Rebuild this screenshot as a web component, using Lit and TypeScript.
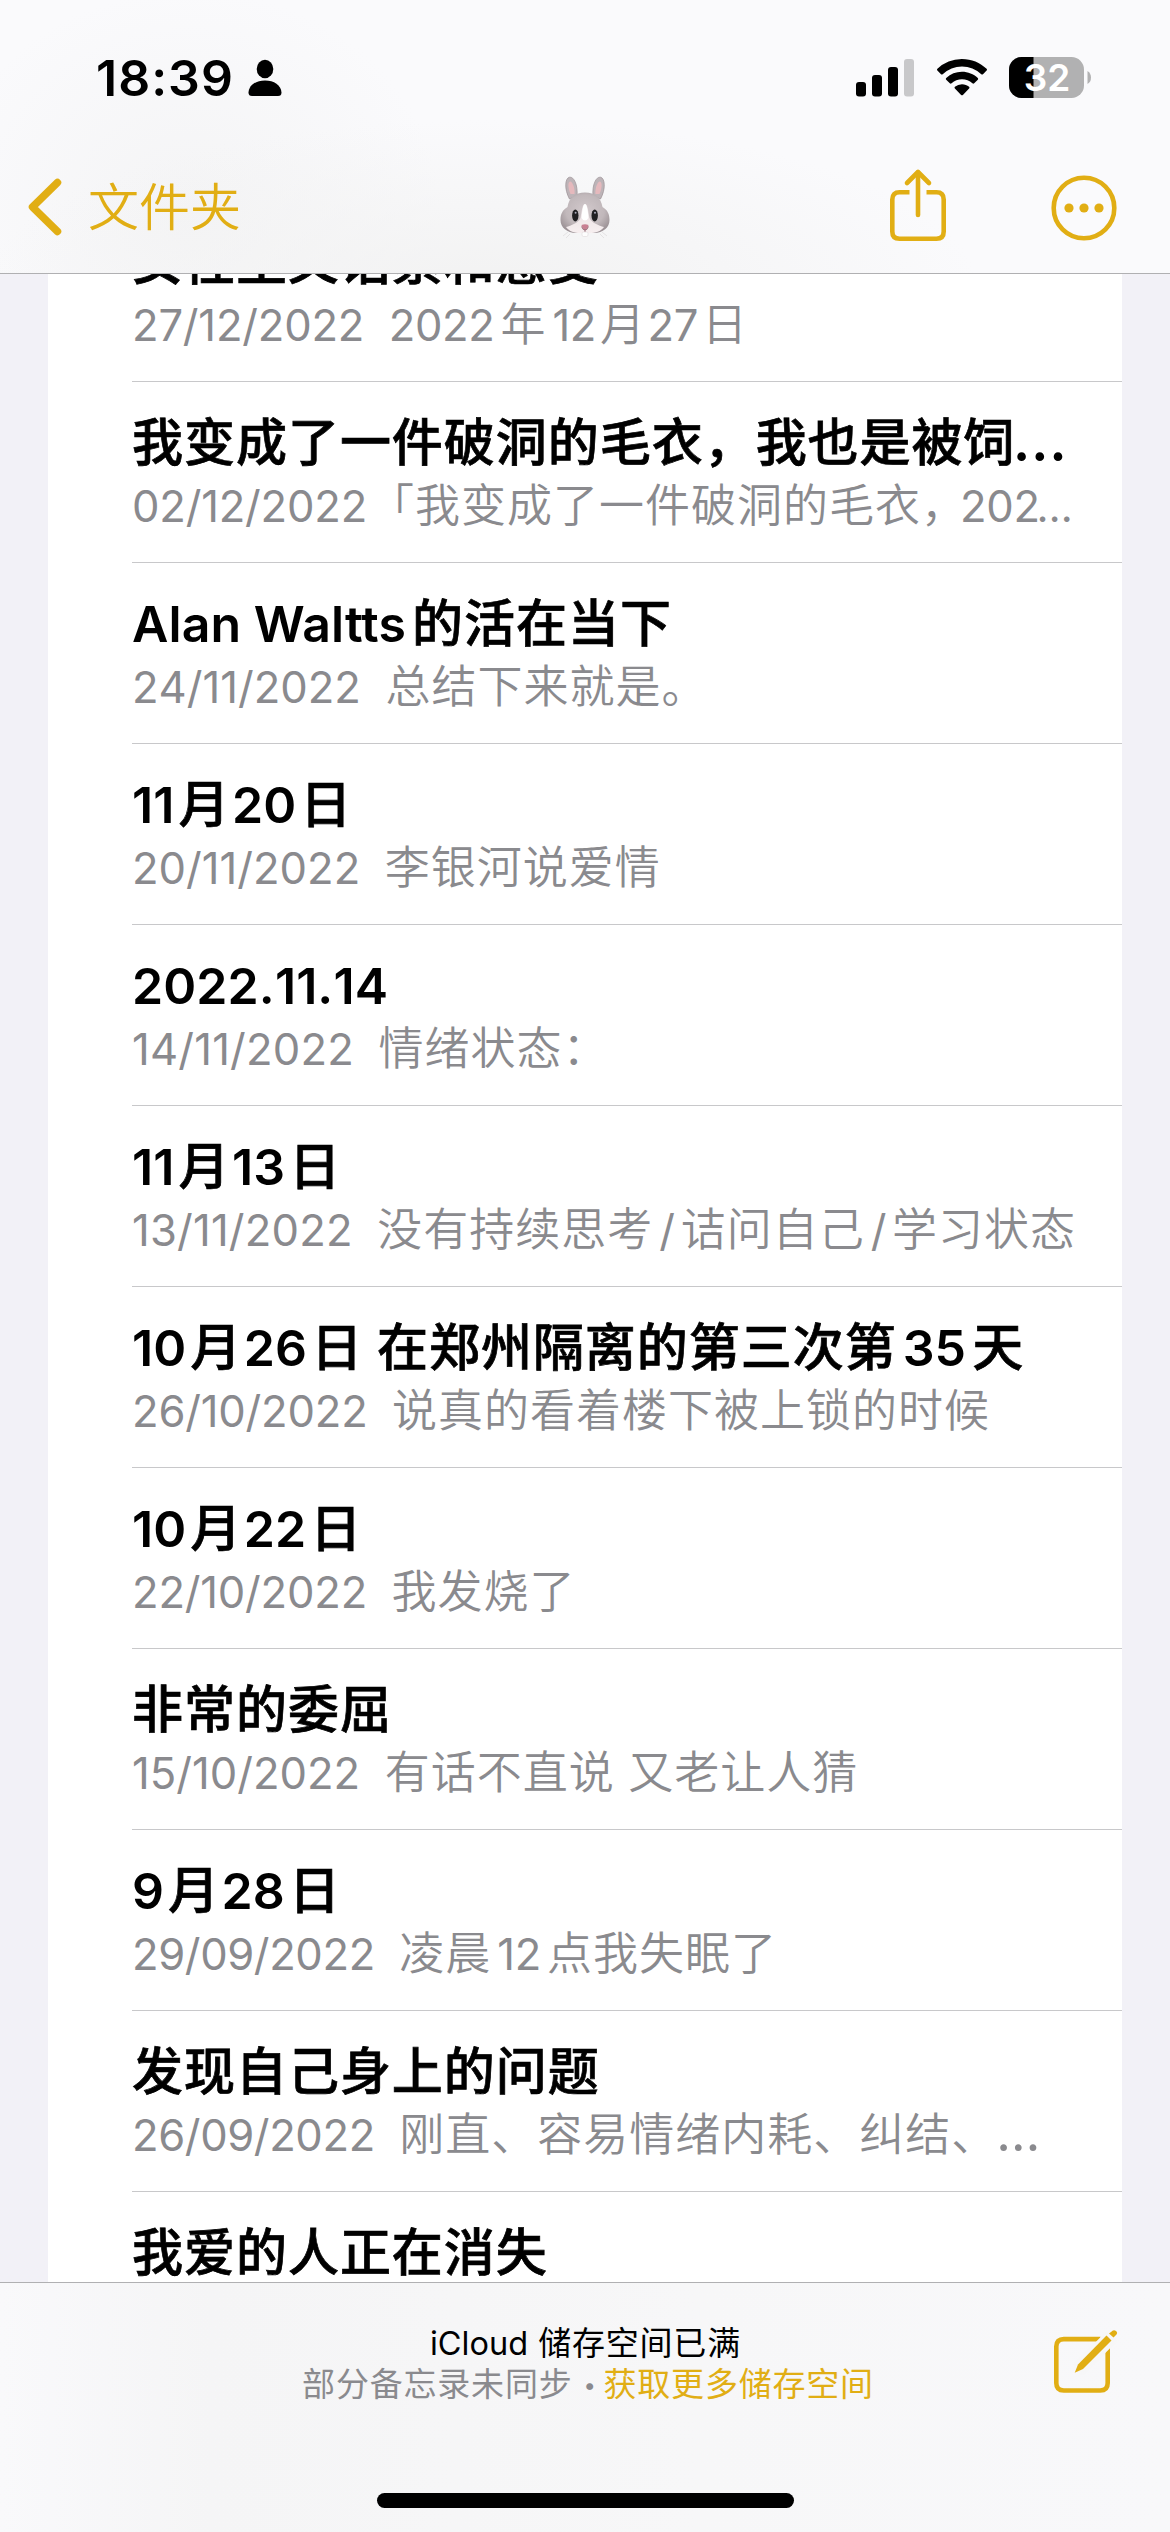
import { LitElement, html, svg, css } from "lit";
import { customElement, property } from "lit/decorators.js";
import { styleMap } from "lit/directives/style-map.js";

interface Note {
  title: string;
  date: string;
  text: string;
  snug?: boolean;
}

const NOTES: Note[] = [
  { title: "女性主义话素和感受", date: "27/12/2022", text: "2022年12月27日" },
  { title: "我变成了一件破洞的毛衣，我也是被饲…", date: "02/12/2022", text: "「我变成了一件破洞的毛衣，202…", snug: true },
  { title: "Alan Waltts的活在当下", date: "24/11/2022", text: "总结下来就是。" },
  { title: "11月20日", date: "20/11/2022", text: "李银河说爱情" },
  { title: "2022.11.14", date: "14/11/2022", text: "情绪状态：" },
  { title: "11月13日", date: "13/11/2022", text: "没有持续思考/诘问自己/学习状态" },
  { title: "10月26日 在郑州隔离的第三次第35天", date: "26/10/2022", text: "说真的看着楼下被上锁的时候" },
  { title: "10月22日", date: "22/10/2022", text: "我发烧了" },
  { title: "非常的委屈", date: "15/10/2022", text: "有话不直说 又老让人猜" },
  { title: "9月28日", date: "29/09/2022", text: "凌晨12点我失眠了" },
  { title: "发现自己身上的问题", date: "26/09/2022", text: "刚直、容易情绪内耗、纠结、…" },
  { title: "我爱的人正在消失", date: "", text: "" },
];

/* Splits mixed text so that Latin runs and ellipses get their own face and spacing. */
const runs = (s: string) =>
  s.split(/([!-~]+(?: [!-~]+)*|…| )/).filter(Boolean).map((part) =>
    part === "…"
      ? html`<span class="dots">…</span>`
      : part === " "
        ? html`<span class="space"> </span>`
        : /^[!-~]/.test(part)
          ? html`<span class="latin ${/[a-z]/.test(part) ? "words" : ""}">${part}</span>`
          : html`<span class="han ${/[月日]$/.test(part) ? "slim" : part.endsWith("，") ? "comma" : ""}">${part}</span>`
  );

/* The digit 1 is narrow in this face, so dates are opened up by how many they hold. */
const dateTracking = (date: string) => ({
  letterSpacing: `${(-0.4 + 0.2 * (date.split("1").length - 1)).toFixed(1)}px`,
});

@customElement("note-row")
export class NoteRow extends LitElement {
  @property({ attribute: false }) note!: Note;

  static styles = css`
    :host {
      display: block;
      box-sizing: border-box;
      height: 181px;
      margin-left: 84px;
      border-bottom: 1px solid #c8c8ca;
      padding-top: 23px;
    }
    .title,
    .sub {
      display: flex;
      align-items: baseline;
      white-space: pre;
    }
    .title::before {
      content: "\\200b";
      font-family: "Noto Sans CJK SC", sans-serif;
      width: 0;
    }
    .title {
      height: 71px;
      line-height: 68px;
      font-size: 51px;
      font-weight: 600;
      letter-spacing: 0.97px;
      color: #000;
    }
    .sub {
      height: 54px;
      line-height: 54px;
      font-size: 45px;
      letter-spacing: 1px;
      color: #8a8a8e;
    }
    .han {
      font-family: "Noto Sans CJK SC", sans-serif;
    }
    .title .han {
      font-weight: 500;
      -webkit-text-stroke: 0.7px #000;
    }
    .sub .han {
      font-weight: 350;
    }
    .latin,
    .date,
    .dots,
    .space {
      font-family: Inter, sans-serif;
      font-kerning: none;
    }
    .title .latin {
      font-size: 50px;
      letter-spacing: 0.1px;
    }
    .title .words {
      font-kerning: normal;
    }
    .title .dots {
      font-size: 60px;
      font-weight: 500;
      line-height: 0;
      margin-left: -3px;
    }
    .sub .latin,
    .date {
      font-size: 43.6px;
      letter-spacing: -0.4px;
    }
    .sub .dots {
      font-size: 51px;
      line-height: 0;
      letter-spacing: 0;
      margin-left: -1px;
    }
    .sub .latin + .dots {
      font-size: 42px;
      margin-left: -3px;
    }
    .han + .latin {
      margin-left: 6px;
    }
    .latin + .han {
      margin-left: 6px;
    }
    .slim + .latin {
      margin-left: 1.5px;
    }
    .latin + .slim {
      margin-left: 4px;
    }
    .comma + .latin {
      margin-left: -7px;
    }
    .date {
      margin-right: 24.5px;
    }
    .date.snug {
      margin-right: 2px;
    }
  `;

  render() {
    const n = this.note;
    return html`
      <div class="title">${runs(n.title)}</div>
      <div class="sub"><span class="date ${n.snug ? "snug" : ""}" style=${styleMap(dateTracking(n.date))}>${n.date}</span>${runs(n.text)}</div>
    `;
  }
}

const person = svg`<svg width="34" height="38" viewBox="0 0 34 38">
  <ellipse cx="17" cy="10" rx="8.3" ry="9.2"/>
  <path d="M4 37Q.5 37 .5 33.500C1 26 8 21.500 17 21.500S33 26 33.500 33.500Q33.500 37 30 37Z"/></svg>`;

const signal = svg`<svg width="59" height="38" viewBox="0 0 59 38">
  <rect x="0" y="23" width="10" height="14.500" rx="3"/><rect x="16" y="16" width="10" height="21.500" rx="3"/>
  <rect x="32" y="8" width="10" height="29.500" rx="3"/><rect x="48" y="0" width="10" height="37.500" rx="3" fill="#c8c8ca"/></svg>`;

const wifi = svg`<svg width="50" height="37" viewBox="0 0 50 37">
  <path d="M25 0C34.500 0 43.200 3.700 49.600 9.800Q50.400 10.700 49.600 11.600L46 15.200Q45.200 16 44.300 15.200A27.800 27.800 0 0 0 5.700 15.200Q4.800 16 4 15.200L.4 11.600Q-.4 10.700.4 9.800A35.500 35.500 0 0 1 25 0Z"/>
  <path d="M25 12.800C31 12.800 36.600 15.100 40.800 18.900Q41.700 19.800 40.800 20.700L37.200 24.300Q36.300 25.100 35.400 24.300A15.500 15.500 0 0 0 14.600 24.300Q13.700 25.100 12.800 24.300L9.200 20.700Q8.300 19.800 9.200 18.900A23.300 23.300 0 0 1 25 12.800Z"/>
  <path d="M25 25.200C27.700 25.200 30.200 26.200 32.100 27.800Q33 28.700 32.100 29.600L25.900 35.900Q25 36.800 24.100 35.900L17.900 29.600Q17 28.700 17.900 27.800A11 11 0 0 1 25 25.200Z"/></svg>`;

const batteryShape = svg`<svg width="83" height="41" viewBox="0 0 83 41">
  <defs><clipPath id="cell"><rect width="75" height="41" rx="12.500"/></clipPath></defs>
  <g clip-path="url(#cell)"><rect width="75" height="41" fill="#b1b1b2"/><rect width="24.500" height="41"/></g>
  <path d="M78.500 14Q82 16 82 20.500T78.500 27Z" fill="#b1b1b2"/></svg>`;

const chevron = svg`<svg width="34" height="58" viewBox="0 0 34 58">
  <path d="M29.500 4.500L4.500 29L29.500 53.500" fill="none" stroke="#e1ae14" stroke-width="7.500" stroke-linecap="round" stroke-linejoin="round"/></svg>`;

const rabbit = svg`<svg width="58" height="64" viewBox="0 0 58 64">
  <defs>
    <radialGradient id="fur" cx=".5" cy=".45" r=".6"><stop offset="0" stop-color="#d2c9cc"/><stop offset=".65" stop-color="#c1b8bb"/><stop offset="1" stop-color="#9c9296"/></radialGradient>
    <linearGradient id="chin" x1="0" y1="0" x2="0" y2="1"><stop offset="0" stop-color="#e9dfe2"/><stop offset="1" stop-color="#f7eff0"/></linearGradient>
  </defs>
  <path d="M13.500 23C8 13 9 2 13.500 1.200S22 9 21 20Z" fill="#bdb4b8" stroke="#9b9195" stroke-width=".7"/>
  <path d="M44.500 23C50 13 49 2 44.500 1.200S36 9 37 20Z" fill="#bdb4b8" stroke="#9b9195" stroke-width=".7"/>
  <path d="M14.500 18C11.500 11 12 6 14 5.500S19 11 18.600 18Z" fill="#e5b9bd"/>
  <path d="M43.500 18C46.500 11 46 6 44 5.500S39 11 39.400 18Z" fill="#e5b9bd"/>
  <path d="M29 16.500C39 16.500 45 21.500 46.500 31C51.500 34 53.500 38 53.500 44C53.500 52 47 56.500 38 57H20C11 56.500 4.500 52 4.500 44C4.500 38 6.500 34 11.500 31C13 21.500 19 16.500 29 16.500Z" fill="url(#fur)"/>
  <path d="M29 28C31.500 28 32 34 33.500 42C35.500 47 43 49.500 48 51C45 55.500 39 57 34 57H24C19 57 13 55.500 10 51C15 49.500 22.500 47 24.500 42C26 34 26.500 28 29 28Z" fill="url(#chin)"/>
  <path d="M29 28C30.800 28 31.700 33 32.500 42Q29 47 25.500 42C26.300 33 27.200 28 29 28Z" fill="#fff"/>
  <ellipse cx="19.300" cy="39.500" rx="3.200" ry="5.900" fill="#202022"/><ellipse cx="38.700" cy="39.500" rx="3.200" ry="5.900" fill="#202022"/>
  <circle cx="19.600" cy="36.800" r="1" fill="#aab"/><circle cx="39" cy="36.800" r="1" fill="#aab"/>
  <path d="M25.500 49Q29 47.500 32.500 49Q31.500 53.500 29 53.500T25.500 49Z" fill="#c97f92"/>
  <path d="M29 53V56M25.500 50.500Q27 54.500 29 54Q31 54.500 32.500 50.500" fill="none" stroke="#8c5a68" stroke-width=".8"/>
  <rect x="26" y="56" width="6" height="4.500" rx="1.500" fill="#fdfdfd" stroke="#d8d2d4" stroke-width=".5"/>
  <path d="M12 56L7 60M14 58L10 62M46 56L51 60M44 58L48 62" stroke="#d9d5d7" stroke-width=".6"/></svg>`;

const share = svg`<svg width="58" height="74" viewBox="0 0 58 74" fill="none" stroke="#e1ae14" stroke-width="4.600">
  <path d="M20.500 24.300H10.500Q3.300 24.300 3.300 31.500V63.500Q3.300 70.700 10.500 70.700H47.500Q54.700 70.700 54.700 63.500V31.500Q54.700 24.300 47.500 24.300H37.500"/>
  <path d="M29 4.500V47" stroke-linecap="round"/><path d="M18 15L29 4L40 15" stroke-linecap="round" stroke-linejoin="round"/></svg>`;

const more = svg`<svg width="66" height="66" viewBox="0 0 66 66" fill="#e1ae14">
  <circle cx="33" cy="33" r="30.300" fill="none" stroke="#e1ae14" stroke-width="4.600"/>
  <circle cx="18" cy="33" r="4.600"/><circle cx="33" cy="33" r="4.600"/><circle cx="48" cy="33" r="4.600"/></svg>`;

const compose = svg`<svg width="64" height="64" viewBox="0 0 64 64" fill="#e1ae14">
  <path d="M46.500 9.100H9.800Q2.300 9.100 2.300 16.600V53Q2.300 60.500 9.800 60.500H46.200Q53.700 60.500 53.700 53V18" fill="none" stroke="#e1ae14" stroke-width="4.600"/>
  <path d="M52.500 4L60 11.500L29 42.500L21.500 35Z" fill="#f7f7f8" stroke="#f7f7f8" stroke-width="4"/>
  <path d="M52.500 5.500L57.500 10.500L29 39L20.700 42.800L24 34.500Z"/><path d="M57 2Q59.500-1 62 1T61.500 5.500L59.500 7.500L55 3.500Z"/></svg>`;

@customElement("app-root")
export class AppRoot extends LitElement {
  static styles = css`
    :host {
      display: flex;
      flex-direction: column;
      width: 1170px;
      height: 2532px;
      overflow: hidden;
      background: #f2f1f7;
      font-family: Inter, "Noto Sans CJK SC", sans-serif;
      color: #000;
    }
    svg {
      display: block;
      flex: none;
    }
    .header {
      flex: none;
      box-sizing: border-box;
      height: 274px;
      border-bottom: 1px solid #b0b0b2;
      background:
        radial-gradient(ellipse 500px 170px at 480px 290px, #f2f2f2, rgba(242, 242, 242, 0)),
        radial-gradient(ellipse 250px 220px at 190px 210px, #f4f4f5, rgba(244, 244, 245, 0)),
        #fafafc;
    }
    .status {
      display: flex;
      align-items: center;
      height: 155px;
      padding: 0 78px 0 96px;
      box-sizing: border-box;
    }
    .time {
      font-size: 50px;
      font-weight: 600;
      letter-spacing: 1px;
      margin-right: 16px;
      width: 136px;
      white-space: nowrap;
    }
    .signal {
      margin-left: auto;
    }
    .wifi {
      margin: 0 22px 0 22px;
    }
    .battery {
      display: grid;
      width: 83px;
      height: 41px;
    }
    .battery > * {
      grid-area: 1 / 1;
    }
    .level {
      z-index: 1;
      width: 75px;
      line-height: 42px;
      text-align: center;
      font-size: 37px;
      font-weight: 600;
      color: #fff;
      text-indent: 1px;
    }
    .nav {
      display: grid;
      grid-template-columns: 1fr auto 1fr;
      align-items: center;
      height: 105px;
      padding: 0 53px 0 28px;
    }
    .back {
      display: flex;
      align-items: center;
      gap: 26px;
      height: 60px;
      margin-top: -2px;
      color: #e1ae14;
      font: 350 51px/60px "Noto Sans CJK SC", sans-serif;
    }
    .back span {
      margin-top: -6px;
    }
    .actions {
      display: flex;
      align-items: center;
      justify-content: flex-end;
      gap: 104px;
    }
    .rabbit {
      margin-left: 25px;
    }
    .share {
      margin-top: -5px;
    }
    .list {
      flex: 1;
      min-height: 0;
      overflow: hidden;
      margin: 0 48px;
      background: #fff;
    }
    .rows {
      margin-top: -73px;
    }
    .footer {
      flex: none;
      box-sizing: border-box;
      height: 250px;
      border-top: 1px solid #b0b0b2;
      display: grid;
      grid-template-columns: 117px 1fr 116px;
      grid-template-rows: 1fr 39px;
      background: linear-gradient(90deg, #f9f9fb, #f5f5f6 18%, #f7f7f8 60%, #f8f8fa);
    }
    .sync {
      grid-column: 2;
      padding-top: 40px;
      text-align: center;
      font-size: 33px;
      line-height: 41px;
      letter-spacing: 0.8px;
      white-space: nowrap;
    }
    .cloud {
      font-size: 32.5px;
      letter-spacing: 0;
    }
    .quiet {
      color: #8a8a8e;
      padding-left: 5px;
    }
    .bullet {
      display: inline-block;
      width: 31px;
      box-sizing: border-box;
      padding-left: 4px;
      text-align: center;
      font-size: 22px;
      line-height: 20px;
      vertical-align: 3px;
    }
    .more-space {
      color: #e1ae14;
    }
    .compose {
      padding-top: 47px;
    }
    .home {
      grid-column: 1 / -1;
      justify-self: center;
      width: 417px;
      height: 15px;
      border-radius: 8px;
      background: #000;
    }
  `;

  render() {
    return html`
      <div class="header">
        <div class="status">
          <span class="time">18:39</span>${person}
          <span class="signal">${signal}</span>
          <span class="wifi">${wifi}</span>
          <div class="battery">${batteryShape}<span class="level">32</span></div>
        </div>
        <div class="nav">
          <div class="back">${chevron}<span>文件夹</span></div>
          <div class="rabbit">${rabbit}</div>
          <div class="actions"><span class="share">${share}</span>${more}</div>
        </div>
      </div>
      <div class="list">
        <div class="rows">${NOTES.map((n) => html`<note-row .note=${n}></note-row>`)}</div>
      </div>
      <div class="footer">
        <div class="sync">
          <div><span class="cloud">iCloud</span> 储存空间已满</div>
          <div class="quiet">部分备忘录未同步<span class="bullet">•</span><span class="more-space">获取更多储存空间</span></div>
        </div>
        <div class="compose">${compose}</div>
        <div class="home"></div>
      </div>
    `;
  }
}
